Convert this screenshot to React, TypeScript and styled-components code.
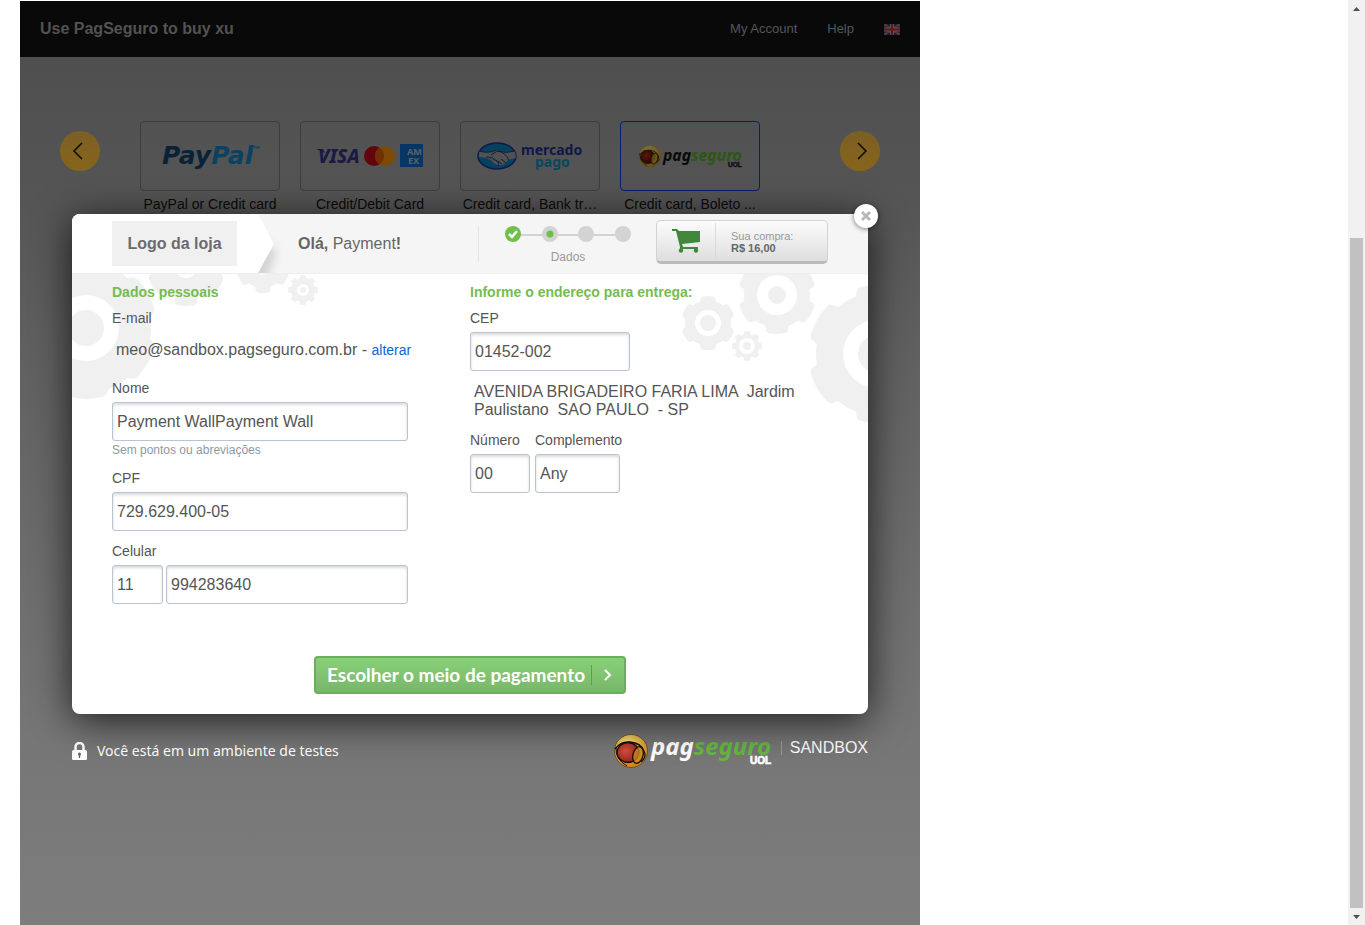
import React from "react";
import styled, { createGlobalStyle } from "styled-components";

const Global = createGlobalStyle`
  * { box-sizing: border-box; }
  body { margin: 0; background: #fff; font-family: "Liberation Sans", Arial, sans-serif; font-size: 14px; color: #555; }
  button, input { font-family: inherit; margin: 0; }
  h1, h2, p { margin: 0; }
  svg { display: block; flex: none; }
`;

const Page = styled.div`
  display: flex;
  justify-content: space-between;
  min-height: 100vh;
`;

const Stage = styled.main`
  flex: 0 1 900px;
  display: grid;
  grid-template: 1fr / 1fr;
  margin: 1px 0 0 20px;
  background: linear-gradient(#4f4f4f 56px, #555 200px, #606060 350px, #6c6c6c 560px, #767676 740px, #7d7d7d);
`;

const Wall = styled.section`
  grid-area: 1 / 1;
`;

const TopBar = styled.header`
  display: flex;
  align-items: center;
  gap: 30px;
  height: 56px;
  padding: 0 20px;
  background: #090909;
`;

const Title = styled.h1`
  margin-right: auto;
  font-size: 16px;
  line-height: 20px;
  color: #525252;
`;

const TopLink = styled.a`
  font-size: 13px;
  line-height: 20px;
  color: #565656;
  text-decoration: none;
`;

const Carousel = styled.div`
  display: flex;
  align-items: flex-start;
  padding: 64px 40px 0;
`;

const Arrow = styled.button`
  display: grid;
  place-items: center;
  flex: none;
  width: 40px;
  height: 40px;
  margin-top: 10px;
  padding: 0;
  border: 0;
  border-radius: 50%;
  background: linear-gradient(#7c5f25, #86651b);
`;

const Methods = styled.div`
  display: flex;
  flex: 1;
  gap: 20px;
  padding: 0 40px;
`;

const Method = styled.button`
  display: block;
  width: 140px;
  padding: 0;
  border: 0;
  background: none;
  font-size: 14px;
  line-height: 26px;
  color: #0b0b0b;
  text-align: center;
`;

const MethodBox = styled.span<{ $selected?: boolean }>`
  display: grid;
  place-items: center;
  height: 70px;
  border: 1px solid ${(p) => (p.$selected ? "#03216b" : "#3e3e3e")};
  border-radius: 4px;
`;

const MethodName = styled.span`
  display: block;
  overflow: hidden;
  white-space: nowrap;
  text-overflow: ellipsis;
`;

const LogoArt = styled.svg`
  overflow: visible;
`;

const Checkout = styled.section`
  grid-area: 1 / 1;
  z-index: 1;
  align-self: start;
  margin: 213px 52px 0;
`;

const Dialog = styled.div`
  position: relative;
  border-radius: 8px;
  background: #fff;
  box-shadow: 0 6px 38px rgba(0, 0, 0, 0.75);
`;

const Close = styled.button`
  position: absolute;
  top: -10px;
  right: -10px;
  z-index: 2;
  display: grid;
  place-items: center;
  width: 24px;
  height: 24px;
  padding: 0;
  border: 0;
  border-radius: 50%;
  background: #fff;
  box-shadow: 0 1px 5px rgba(0, 0, 0, 0.5);
`;

const DialogHead = styled.header`
  display: flex;
  align-items: center;
  height: 60px;
  padding-right: 40px;
  border-bottom: 1px solid #eee;
  border-radius: 8px 8px 0 0;
  background: #f5f5f5;
`;

const StoreArea = styled.div`
  display: flex;
  align-items: center;
  flex: none;
  width: 186px;
  height: 59px;
  padding-left: 40px;
  border-radius: 8px 0 0 0;
  background: #fff;
`;

const StoreLogo = styled.div`
  width: 125px;
  height: 45px;
  background: #f0f0f0;
  color: #6b6b6b;
  font-size: 16px;
  font-weight: bold;
  line-height: 45px;
  text-align: center;
`;

const Greeting = styled.p`
  flex: 1;
  font-size: 16px;
  line-height: 20px;
  color: #666;
`;

const Steps = styled.div`
  flex: none;
  width: 178px;
  height: 36px;
  padding-left: 26px;
  border-left: 1px solid #e4e4e4;
  font-size: 12px;
  line-height: 14px;
  color: #999;
`;

const StepName = styled.div`
  width: 126px;
  padding-top: 8px;
  text-align: center;
`;

const Purchase = styled.button`
  display: flex;
  align-items: center;
  flex: none;
  width: 172px;
  height: 44px;
  margin-bottom: 3px;
  padding: 0 14px;
  border: 1px solid #d3d3d3;
  border-bottom: 3px solid #bbb;
  border-radius: 5px;
  background: linear-gradient(#fcfcfc, #dedede);
  font-size: 11px;
  line-height: 12px;
  color: #999;
  text-align: left;
`;

const PurchaseText = styled.span`
  margin-left: 14px;
  padding: 7px 0 5px 15px;
  border-left: 1px solid #dadada;
  strong { display: block; color: #666; }
`;

const DialogBody = styled.form`
  position: relative;
  overflow: hidden;
  padding: 9px 40px 20px;
  border-radius: 0 0 8px 8px;
`;

const GearArt = styled.svg<{ $side: "left" | "right" }>`
  position: absolute;
  top: 0;
  ${(p) => p.$side}: 0;
`;

const Columns = styled.div`
  position: relative;
  display: grid;
  grid-template-columns: 296px minmax(0, 340px);
  column-gap: 62px;
`;

const Column = styled.div`
  display: flex;
  flex-direction: column;
  gap: 12px;
`;

const Heading = styled.h2`
  margin-bottom: -3px;
  font-size: 14px;
  line-height: 18px;
  color: #74bd50;
`;

const Row = styled.div<{ $gap: number }>`
  display: flex;
  gap: ${(p) => p.$gap}px;
`;

const Field = styled.div`
  display: flex;
  flex-direction: column;
  align-items: flex-start;
`;

const Label = styled.label`
  height: 16px;
  margin-bottom: 6px;
  font-size: 14px;
  line-height: 16px;
  white-space: nowrap;
  color: #555;
`;

const Input = styled.input<{ $w: number }>`
  width: ${(p) => p.$w}px;
  height: 39px;
  padding: 0 4px;
  border: 1px solid #b7c4d1;
  border-radius: 3px;
  background: #fff;
  box-shadow: inset 0 2px 3px rgba(0, 0, 0, 0.15);
  font-size: 16px;
  color: #555;
  outline: 0;
`;

const Hint = styled.small`
  margin-top: 1px;
  font-size: 12px;
  line-height: 16px;
  color: #8c99a4;
`;

const Email = styled.div`
  padding-left: 4px;
  font-size: 16px;
  line-height: 36px;
  white-space: nowrap;
  a { font-size: 14px; color: #0a66cc; text-decoration: none; }
`;

const Address = styled.p`
  padding: 0 4px 1px;
  font-size: 16px;
  line-height: 18px;
  white-space: pre-wrap;
`;

const Submit = styled.button`
  display: flex;
  align-items: center;
  justify-content: space-between;
  width: 312px;
  height: 38px;
  margin: 52px auto 0;
  padding: 0 11px;
  border: 2px solid #6bae5c;
  border-radius: 4px;
  background: linear-gradient(#88d178, #78b769);
  color: #fff;
  font-family: Lato, sans-serif;
  font-size: 19px;
  font-weight: 700;
  line-height: 24px;
  white-space: nowrap;
`;

const SubmitArrow = styled.span`
  padding-left: 11px;
  border-left: 1px solid #5f9f52;
`;

const Foot = styled.footer`
  display: flex;
  align-items: center;
  padding-top: 19px;
  color: #fff;
`;

const Notice = styled.p`
  flex: 1;
  padding-left: 10px;
  font-family: "Noto Sans", sans-serif;
  font-size: 14px;
  line-height: 20px;
`;

const Sandbox = styled.span`
  margin: 0 0 6px 8px;
  padding-left: 8px;
  border-left: 1px solid #999;
  font-size: 16px;
  line-height: 14px;
`;

const Scrollbar = styled.aside`
  display: flex;
  flex-direction: column;
  flex: none;
  width: 17px;
  background: #f1f1f1;
`;

const ScrollEnd = styled.span`
  display: grid;
  place-items: center;
  height: 17px;
`;

const Gap = styled.span`
  flex: 221;
`;

const Thumb = styled.span`
  flex: 669;
  margin: 0 2px;
  background: #c1c1c1;
`;

type GearSpec = { x: number; y: number; tip: number; root: number; hole: number; hub: number; teeth?: number };

function gearPath({ x, y, tip, root, hole, hub, teeth = 6 }: GearSpec) {
  const step = 360 / teeth;
  const at = (r: number, deg: number) => {
    const a = (deg * Math.PI) / 180;
    return `${(x + r * Math.cos(a)).toFixed(1)} ${(y + r * Math.sin(a)).toFixed(1)}`;
  };
  let d = "";
  for (let i = 0; i < teeth; i++) {
    const c = 90 + i * step;
    const half = step * 0.29;
    d += `${i ? "L" : "M"}${at(root, c - half - step * 0.05)}L${at(tip - 2, c - half)}Q${at(tip, c - half + 1)} ${at(tip, c - half + step * 0.1)}`;
    d += `A${tip} ${tip} 0 0 1 ${at(tip, c + half - step * 0.1)}Q${at(tip, c + half - 1)} ${at(tip - 2, c + half)}L${at(root, c + half + step * 0.05)}`;
    d += `A${root} ${root} 0 0 1 ${at(root, c + step - half - step * 0.05)}`;
  }
  const ring = (r: number) => `M${x - r} ${y}a${r} ${r} 0 1 0 ${2 * r} 0a${r} ${r} 0 1 0 ${-2 * r} 0z`;
  return `${d}z${ring(hole)}${hub ? ring(hub) : ""}`;
}

const leftGears: GearSpec[] = [
  { x: 14, y: 54, tip: 71, root: 65, hole: 33, hub: 18 },
  { x: 114, y: -7, tip: 39, root: 32, hole: 11, hub: 0 },
  { x: 191, y: -8, tip: 27, root: 22, hole: 9, hub: 0 },
  { x: 231, y: 16, tip: 15, root: 12, hole: 6, hub: 3, teeth: 8 },
];

const rightGears: GearSpec[] = [
  { x: 197, y: 80, tip: 69, root: 61, hole: 34, hub: 19 },
  { x: 97, y: 21, tip: 39, root: 33, hole: 20, hub: 9 },
  { x: 28, y: 49, tip: 27, root: 23, hole: 13, hub: 8 },
  { x: 67, y: 72, tip: 15, root: 12, hole: 8, hub: 4, teeth: 8 },
];

function Gears({ side, list, w, h }: { side: "left" | "right"; list: GearSpec[]; w: number; h: number }) {
  return (
    <GearArt $side={side} width={w} height={h} aria-hidden="true">
      {list.map((g) => (
        <path key={`${g.x}-${g.y}`} d={gearPath(g)} fill="#f0f0f0" fillRule="evenodd" />
      ))}
    </GearArt>
  );
}

const PayPalLogo = () => (
  <LogoArt width="98" height="34" viewBox="0 0 98 34" fontFamily="DejaVu Sans, sans-serif" fontWeight="700" fontStyle="italic" fontSize="25">
    <text x="1" y="25" fill="#0a2238">Pay<tspan fill="#0c4261">Pal</tspan></text>
    <text x="92" y="10" fontSize="4" fill="#0c4261">TM</text>
  </LogoArt>
);

const CardsLogo = () => (
  <LogoArt width="108" height="24" viewBox="0 0 108 24" fontFamily="Noto Sans, sans-serif" fontWeight="800">
    <text x="2" y="19" fontSize="19" fontStyle="italic" fill="#1a1a45">VISA</text>
    <path d="M0 5h7l2 4z" fill="#1a1a45" />
    <circle cx="58" cy="12" r="10" fill="#62060e" />
    <circle cx="69" cy="12" r="10" fill="#7d4b05" />
    <path d="M63.500 3.600a10 10 0 0 1 0 16.800a10 10 0 0 1 0-16.800z" fill="#712f06" />
    <path d="M84 0h23v23H84z" fill="#063566" />
    <g fontSize="9" fill="#555f69">
      <text x="91" y="11">AM</text>
      <text x="92" y="20">EX</text>
    </g>
  </LogoArt>
);

const MercadoLogo = () => (
  <LogoArt width="106" height="34" viewBox="0 0 106 34" fontFamily="Noto Sans, sans-serif" fontWeight="700">
    <g transform="translate(0 2)">
      <ellipse cx="20" cy="15" rx="19" ry="13" fill="#06425d" stroke="#0c1c48" strokeWidth="1.500" />
      <path d="M2 10q10 3 17-1q7 4 19 1l1 7-8 2q-3 5-8 5-5 1-9-5-6-3-12-3z" fill="#515151" />
      <path d="M2 10q10 3 17-1M14 14l6-4q8 1 12 9M38 10q-9 3-17 0M9 17q2-3 4 0 3-2 4 2 3-1 3 2 3 0 1 4M24 18l5 4M21 20l4 3" fill="none" stroke="#0c2148" strokeWidth="1" />
    </g>
    <text x="44" y="16" fontSize="14" fill="#10184a">mercado</text>
    <text x="58" y="28" fontSize="14" fill="#08485f">pago</text>
  </LogoArt>
);

function PagSeguroLogo({ dim = false }: { dim?: boolean }) {
  const c = dim
    ? { word: "#0a0a0a", green: "#2c5711", gold: "#6b5518", light: "#77733b", red: "#60150b", dark: "#1d0606", uol: "#111" }
    : { word: "#fff", green: "#66b83f", gold: "#d08a1c", light: "#ffe680", red: "#d9503c", dark: "#8a1f18", uol: "#fff" };
  const id = dim ? "orbDim" : "orb";
  return (
    <LogoArt width={dim ? 105 : 160} height={dim ? 24 : 36} viewBox="0 0 160 36" role="img" aria-label="PagSeguro UOL">
      <defs>
        <radialGradient id={id} cx="0.4" cy="0.25" r="0.7">
          <stop offset="0" stopColor={c.light} />
          <stop offset="1" stopColor={c.gold} />
        </radialGradient>
        <radialGradient id={`${id}Red`} cx="0.4" cy="0.4" r="0.7">
          <stop offset="0" stopColor={c.red} />
          <stop offset="1" stopColor={c.dark} />
        </radialGradient>
      </defs>
      <circle cx="18" cy="18" r="16.500" fill={`url(#${id})`} stroke="#5b3d12" strokeWidth="0.700" />
      <path d="M2 16Q8 8 17 9Q28 10 31 18Q34 24 28 29" fill="none" stroke="#15100c" strokeWidth="1.300" />
      <ellipse cx="15" cy="19.500" rx="11" ry="10" fill={`url(#${id}Red)`} stroke="#15100c" strokeWidth="1.300" />
      <path d="M3 14Q2 26 14 33" fill="none" stroke="#15100c" strokeWidth="1" />
      <ellipse cx="25" cy="22" rx="5" ry="8.500" transform="rotate(15 25 22)" fill={c.gold} fillOpacity="0.800" stroke="#15100c" strokeWidth="1.300" />
      <text x="38" y={dim ? 26 : 22} fontFamily="Noto Sans, sans-serif" fontStyle="italic" fontWeight="700" fontSize="24" fill={c.word}>
        pag<tspan fill={c.green}>seguro</tspan>
      </text>
      <text x="137" y={dim ? 35 : 31} fontFamily="Liberation Sans, sans-serif" fontWeight="700" fontSize="10" fill={c.uol} stroke={c.uol} strokeWidth="0.700">UOL</text>
    </LogoArt>
  );
}

const Flag = () => (
  <svg width="16" height="11" viewBox="0 0 16 11" role="img" aria-label="English">
    <path d="M0 0h16v11H0z" fill="#181c42" />
    <path d="M0 0l16 11M16 0L0 11" stroke="#555" strokeWidth="2" />
    <path d="M0 0l16 11M16 0L0 11" stroke="#5c1717" strokeWidth="0.800" />
    <path d="M8 0v11M0 5.500h16" stroke="#555" strokeWidth="4" />
    <path d="M8 0v11M0 5.500h16" stroke="#651515" strokeWidth="2" />
  </svg>
);

const Chevron = ({ right = false }: { right?: boolean }) => (
  <svg width="16" height="18" viewBox="0 0 16 18" fill="none" stroke="#0a0a0a" strokeWidth="1.500">
    <path d={right ? "M6 1l8 8-8 8" : "M10 1L2 9l8 8"} />
  </svg>
);

const HeadArrow = () => (
  <svg width="40" height="59" viewBox="0 0 40 59" aria-hidden="true">
    <defs>
      <filter id="soft" x="-1" y="-1" width="3" height="3">
        <feGaussianBlur stdDeviation="5" />
      </filter>
    </defs>
    <path d="M-6 22L14 32 18 40 8 66H-6z" fill="#000" fillOpacity="0.140" filter="url(#soft)" />
    <path d="M0 0l16 30L0 59z" fill="#fff" />
  </svg>
);

const StepTrack = () => (
  <svg width="128" height="16" viewBox="0 0 128 16" role="img" aria-label="Step 2 of 4">
    <path d="M9 9h110" stroke="#d3d3d3" strokeWidth="2" />
    <circle cx="8" cy="8" r="8" fill="#6fbf4b" />
    <path d="M4 8l3 3 5-6" fill="none" stroke="#fff" strokeWidth="2.500" />
    <circle cx="45" cy="8" r="8" fill="#d3d3d3" />
    <circle cx="45" cy="8" r="3.500" fill="#6fbf4b" />
    <circle cx="81" cy="8" r="8" fill="#d3d3d3" />
    <circle cx="118" cy="8" r="8" fill="#d3d3d3" />
  </svg>
);

const Cart = () => (
  <svg width="30" height="26" viewBox="0 0 30 26" fill="#41873a">
    <path d="M1 1h5l2 2h21v11L11 16l1 3h15v2H9v-2L5 3H1z" />
    <circle cx="10" cy="22.500" r="2.200" />
    <circle cx="25" cy="22.500" r="2.200" />
  </svg>
);

const Lock = () => (
  <svg width="15" height="18" viewBox="0 0 15 18">
    <path d="M3.500 9V5a4 4 0 0 1 8 0v4" fill="none" stroke="#fff" strokeWidth="2.500" />
    <rect y="8" width="15" height="10" rx="1.500" fill="#fff" />
    <path d="M7.500 10.500a1.500 1.500 0 0 1 1 2.600L8 16H7l-.5-2.900a1.500 1.500 0 0 1 1-2.600z" fill="#666" />
  </svg>
);

const methods = [
  { name: "PayPal or Credit card", logo: <PayPalLogo /> },
  { name: "Credit/Debit Card", logo: <CardsLogo /> },
  { name: "Credit card, Bank tr…", logo: <MercadoLogo /> },
  { name: "Credit card, Boleto ...", logo: <PagSeguroLogo dim />, selected: true },
];

export default function App() {
  return (
    <Page>
      <Global />
      <Stage>
        <Wall>
          <TopBar>
            <Title>Use PagSeguro to buy xu</Title>
            <TopLink href="#account">My Account</TopLink>
            <TopLink href="#help">Help</TopLink>
            <Flag />
          </TopBar>
          <Carousel>
            <Arrow type="button" aria-label="Previous"><Chevron /></Arrow>
            <Methods>
              {methods.map((m) => (
                <Method key={m.name} type="button">
                  <MethodBox $selected={m.selected}>{m.logo}</MethodBox>
                  <MethodName>{m.name}</MethodName>
                </Method>
              ))}
            </Methods>
            <Arrow type="button" aria-label="Next"><Chevron right /></Arrow>
          </Carousel>
        </Wall>

        <Checkout>
          <Dialog role="dialog" aria-label="PagSeguro">
            <Close type="button" aria-label="Fechar">
              <svg width="10" height="10" viewBox="0 0 10 10" stroke="#b8b8b8" strokeWidth="3">
                <path d="M1 1l8 8M9 1L1 9" />
              </svg>
            </Close>
            <DialogHead>
              <StoreArea><StoreLogo>Logo da loja</StoreLogo></StoreArea>
              <HeadArrow />
              <Greeting><b>Olá,</b> Payment<b>!</b></Greeting>
              <Steps>
                <StepTrack />
                <StepName>Dados</StepName>
              </Steps>
              <Purchase type="button">
                <Cart />
                <PurchaseText>Sua compra:<strong>R$ 16,00</strong></PurchaseText>
              </Purchase>
            </DialogHead>
            <DialogBody onSubmit={(e) => e.preventDefault()}>
              <Gears side="left" list={leftGears} w={260} h={130} />
              <Gears side="right" list={rightGears} w={188} h={160} />
              <Columns>
                <Column>
                  <Heading>Dados pessoais</Heading>
                  <Field>
                    <Label as="span">E-mail</Label>
                    <Email>meo@sandbox.pagseguro.com.br - <a href="#alterar">alterar</a></Email>
                  </Field>
                  <Field>
                    <Label htmlFor="nome">Nome</Label>
                    <Input id="nome" $w={296} defaultValue="Payment WallPayment Wall" />
                    <Hint>Sem pontos ou abreviações</Hint>
                  </Field>
                  <Field>
                    <Label htmlFor="cpf">CPF</Label>
                    <Input id="cpf" $w={296} defaultValue="729.629.400-05" />
                  </Field>
                  <Field>
                    <Label htmlFor="ddd">Celular</Label>
                    <Row $gap={3}>
                      <Input id="ddd" $w={51} defaultValue="11" />
                      <Input aria-label="Celular" $w={242} defaultValue="994283640" />
                    </Row>
                  </Field>
                </Column>
                <Column>
                  <Heading>Informe o endereço para entrega:</Heading>
                  <Field>
                    <Label htmlFor="cep">CEP</Label>
                    <Input id="cep" $w={160} defaultValue="01452-002" />
                  </Field>
                  <Address>{"AVENIDA BRIGADEIRO FARIA LIMA  Jardim\nPaulistano  SAO PAULO  - SP"}</Address>
                  <Row $gap={5}>
                    <Field>
                      <Label htmlFor="numero">Número</Label>
                      <Input id="numero" $w={60} defaultValue="00" />
                    </Field>
                    <Field>
                      <Label htmlFor="complemento">Complemento</Label>
                      <Input id="complemento" $w={85} defaultValue="Any" />
                    </Field>
                  </Row>
                </Column>
              </Columns>
              <Submit type="submit">
                Escolher o meio de pagamento
                <SubmitArrow>
                  <svg width="10" height="20" viewBox="0 0 10 20" fill="none" stroke="#fff" strokeWidth="2">
                    <path d="M2 5l5 5-5 5" />
                  </svg>
                </SubmitArrow>
              </Submit>
            </DialogBody>
          </Dialog>
          <Foot>
            <Lock />
            <Notice>Você está em um ambiente de testes</Notice>
            <PagSeguroLogo />
            <Sandbox>SANDBOX</Sandbox>
          </Foot>
        </Checkout>
      </Stage>
      <Scrollbar aria-hidden="true">
        <ScrollEnd><svg width="7" height="4"><path d="M0 4h7L3.500 0z" fill="#505050" /></svg></ScrollEnd>
        <Gap />
        <Thumb />
        <ScrollEnd><svg width="7" height="4"><path d="M0 0h7L3.500 4z" fill="#505050" /></svg></ScrollEnd>
      </Scrollbar>
    </Page>
  );
}
